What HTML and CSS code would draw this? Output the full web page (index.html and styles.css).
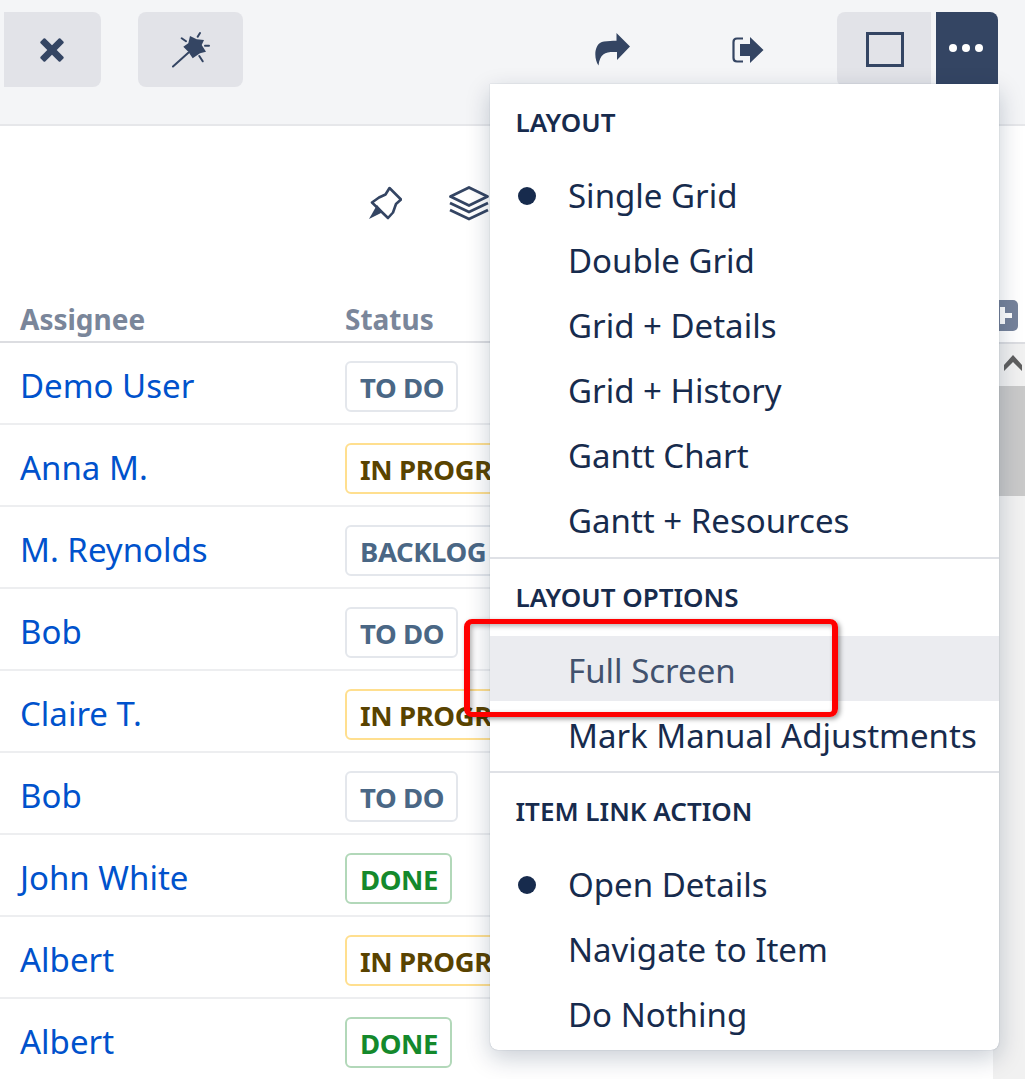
FILE: index.html
```html
<!DOCTYPE html>
<html lang="en">
<head>
<meta charset="utf-8">
<title>Structure</title>
<link rel="stylesheet" href="styles.css">
</head>
<body>
<div class="page">
  <header class="toolbar">
    <button class="tb-btn btn-close">
      <svg width="24" height="24" viewBox="0 0 24 24"><path fill="#344563" d="M5.200 0.600 12 7.300 18.800 0.600 Q19.600 -0.100 20.400 0.600 L23.400 3.600 Q24.100 4.400 23.400 5.200 L16.700 12 23.400 18.800 Q24.100 19.600 23.400 20.400 L20.400 23.400 Q19.600 24.100 18.800 23.400 L12 16.700 5.200 23.400 Q4.400 24.100 3.600 23.400 L0.600 20.400 Q-0.100 19.600 0.600 18.800 L7.300 12 0.600 5.200 Q-0.100 4.400 0.600 3.600 L3.600 0.600 Q4.400 -0.100 5.200 0.600Z"/></svg>
    </button>
    <button class="tb-btn btn-wand">
      <svg width="38" height="38" viewBox="0 0 38 38"><path stroke="#344563" stroke-width="2" stroke-linecap="round" fill="none" d="M1 35.500 16.300 21.700M28 2 25.700 5.700M9.700 7.300 14 10.300M33 14.700H37M27.300 25 30.700 30.300"/><path fill="#344563" d="M18 5 24.700 8.300 32 9 29.700 14 34 20.700 28 22.300 20.700 27.300 16.300 20.700 11.300 15.700 16.300 12.300Z"/></svg>
    </button>
    <span class="tb-spacer"></span>
    <span class="tb-icon icon-share">
      <svg width="36" height="33" viewBox="0 0 36 33"><path fill="#344563" d="M22.500 0 36 13.500 23 27V19C12 18.500 6 20 4.500 32.500 0 27-1 10 10 8.500 14 7.800 18 7.700 22.500 7.700Z"/></svg>
    </span>
    <span class="tb-icon icon-exit">
      <svg width="32" height="26" viewBox="0 0 32 26"><path fill="none" stroke="#344563" stroke-width="2.200" d="M11 1.500H5Q1.500 1.500 1.500 5V21Q1.500 24.500 5 24.500H11"/><path fill="#344563" d="M18 0 31.500 13 18 26V19H8V7H18Z"/></svg>
    </span>
    <button class="tb-btn btn-square"><span class="square-glyph"></span></button>
    <button class="tb-btn btn-more"><span class="dot"></span><span class="dot"></span><span class="dot"></span></button>
  </header>

  <div class="content">
    <main class="grid-area">
      <div class="view-icons">
        <svg width="34" height="34" viewBox="0 0 34 34"><path fill="none" stroke="#344563" stroke-width="2.600" stroke-linejoin="round" d="M21.500 2 33 13.500 28 18 25 26.500 20 32 4 16.500 11 11.500 17.500 8.500Z"/><path fill="#344563" d="M1 33 9 19 15 26Z"/></svg>
        <svg width="40" height="35" viewBox="0 0 40 35"><path fill="none" stroke="#344563" stroke-width="2.800" stroke-linejoin="round" d="M20 1.500 38.500 10.500 20 19.500 1.500 10.500Z"/><path fill="none" stroke="#344563" stroke-width="2.800" d="M1 17 20 26 39 17M1 24 20 33 39 24"/></svg>
      </div>
      <div class="row head">
        <div class="col-a">Assignee</div>
        <div class="col-s">Status</div>
      </div>
      <div class="row"><a class="col-a name">Demo User</a><div class="col-s"><span class="lozenge todo">TO DO</span></div></div>
      <div class="row"><a class="col-a name">Anna M.</a><div class="col-s"><span class="lozenge prog">IN PROGRESS</span></div></div>
      <div class="row"><a class="col-a name">M. Reynolds</a><div class="col-s"><span class="lozenge todo">BACKLOG</span></div></div>
      <div class="row"><a class="col-a name">Bob</a><div class="col-s"><span class="lozenge todo">TO DO</span></div></div>
      <div class="row"><a class="col-a name">Claire T.</a><div class="col-s"><span class="lozenge prog">IN PROGRESS</span></div></div>
      <div class="row"><a class="col-a name">Bob</a><div class="col-s"><span class="lozenge todo">TO DO</span></div></div>
      <div class="row"><a class="col-a name">John White</a><div class="col-s"><span class="lozenge done">DONE</span></div></div>
      <div class="row"><a class="col-a name">Albert</a><div class="col-s"><span class="lozenge prog">IN PROGRESS</span></div></div>
      <div class="row"><a class="col-a name">Albert</a><div class="col-s"><span class="lozenge done">DONE</span></div></div>
    </main>
    <aside class="rail">
      <div class="rail-head"><span class="plus"></span></div>
      <div class="scrollbar">
        <div class="sb-arrow"><svg width="18" height="16" viewBox="0 0 18 16"><path fill="#5f5f5f" d="M9 0 18 10V16L9 7 0 16V10Z"/></svg></div>
        <div class="sb-thumb"></div>
      </div>
    </aside>
  </div>
</div>

<nav class="menu">
  <h4 class="menu-title">LAYOUT</h4>
  <div class="menu-item on">Single Grid</div>
  <div class="menu-item">Double Grid</div>
  <div class="menu-item">Grid + Details</div>
  <div class="menu-item">Grid + History</div>
  <div class="menu-item">Gantt Chart</div>
  <div class="menu-item">Gantt + Resources</div>
  <hr class="menu-sep wide">
  <h4 class="menu-title">LAYOUT OPTIONS</h4>
  <div class="menu-item hover">Full Screen</div>
  <div class="menu-item">Mark Manual Adjustments</div>
  <hr class="menu-sep">
  <h4 class="menu-title">ITEM LINK ACTION</h4>
  <div class="menu-item on">Open Details</div>
  <div class="menu-item">Navigate to Item</div>
  <div class="menu-item">Do Nothing</div>
</nav>
<div class="callout"></div>
</body>
</html>
```
FILE: styles.css
```css
* { box-sizing: border-box; }
html, body { margin: 0; height: 1079px; overflow: hidden; background: #fff; }
body { font-family: "Noto Sans", "Open Sans", sans-serif; color: #172b4d; position: relative; }
.page { display: flex; flex-direction: column; height: 1079px; }

.toolbar { height: 126px; flex: none; background: #f4f5f7; border-bottom: 2px solid #e6e7ea; display: flex; align-items: flex-start; padding: 12px 27px 0 4px; }
.tb-btn { border: 0; padding: 0; height: 75px; background: #e2e3e8; border-radius: 8px; display: flex; align-items: center; justify-content: center; gap: 5px; }
.btn-close { width: 97px; border-radius: 0 8px 8px 0; padding-right: 2px; }
.btn-wand { width: 105px; margin-left: 37px; }
.tb-spacer { flex: 1; }
.tb-icon { display: flex; justify-content: center; align-items: center; height: 75px; }
.icon-share { width: 36px; margin-right: 102px; }
.icon-exit { width: 32px; margin-right: 73px; }
.btn-square { width: 94px; border-radius: 8px 0 0 8px; padding-left: 2px; }
.square-glyph { width: 38px; height: 35px; border: 3px solid #344563; }
.btn-more { width: 62px; margin-left: 5px; background: #344563; border-radius: 0 8px 0 0; height: 80px; padding: 0 2px 9px 0; }
.dot { width: 8px; height: 8px; border-radius: 50%; background: #fff; }

.content { flex: 1; display: flex; min-height: 0; }
.grid-area { flex: 1; min-width: 0; overflow: hidden; }
.view-icons { height: 175px; display: flex; gap: 47px; padding: 60px 0 0 368px; align-items: flex-start; }
.row { height: 82px; display: flex; align-items: center; padding-top: 6px; border-bottom: 2px solid #edeef0; white-space: nowrap; }
.row.head { height: 42px; padding-top: 0; align-items: flex-start; border-bottom-color: #dcdde1; font-size: 28px; font-weight: 700; color: #7a869a; line-height: 36px; }
.col-a { width: 345px; flex: none; padding-left: 20px; }
.col-s { flex: 1; min-width: 0; }
.name { color: #0052cc; font-size: 33px; line-height: 44px; }
.lozenge { display: inline-block; height: 51px; line-height: 50px; padding: 0 12px 0 13px; border: 2px solid; border-radius: 6px; font-size: 27.5px; font-weight: 700; letter-spacing: -.4px; }
.todo { color: #4a6785; border-color: #e4e7ec; }
.prog { color: #594300; border-color: #ffdf8f; }
.done { color: #14892c; border-color: #b2d8b9; }

.rail { width: 32px; flex: none; }
.rail-head { height: 216px; position: relative; }
.plus { position: absolute; left: 1px; top: 174px; width: 24px; height: 31px; border-radius: 5px; background: #76839b; }
.plus::before { content: ""; position: absolute; left: 6px; top: 13px; width: 18px; height: 5px; background: #fff; clip-path: inset(0 6px 0 0); }
.plus::after { content: ""; position: absolute; left: 6px; top: 7px; width: 5px; height: 17px; background: #fff; }
.scrollbar { height: 737px; background: #f1f1f1; border-top: 2px solid #dcdde1; }
.sb-arrow { height: 42px; display: flex; padding-top: 11px; padding-left: 11px; }
.sb-thumb { height: 110px; background: #c9c9c9; }

.menu { position: absolute; left: 490px; top: 84px; width: 509px; height: 966px; background: #fff; border-radius: 0 0 8px 8px; box-shadow: 0 8px 24px rgba(9, 30, 66, .22), 0 0 1px rgba(9, 30, 66, .4); }
.menu-title { margin: 0; padding: 0 25.5px 2px; height: 77px; display: flex; align-items: center; font-size: 26px; font-weight: 600; color: #172b4d; }
.menu-item { height: 65px; line-height: 69px; padding-left: 78px; font-size: 33px; position: relative; white-space: nowrap; }
.menu-item.on::before { content: ""; position: absolute; left: 28px; top: 26px; width: 18px; height: 18px; border-radius: 50%; background: #172b4d; }
.menu-item.hover { background: #ebecf0; color: #42526e; }
.menu-sep { margin: 5px 0 0; border: 0; border-top: 2px solid #dfe1e6; }
.menu-sep.wide { margin-top: 6px; }
.callout { position: absolute; left: 464px; top: 619px; width: 374px; height: 98px; border-style: solid; border-color: #f00; border-width: 5px 6px; border-radius: 8px; box-shadow: 2px 2px 5px rgba(0, 0, 0, .4), inset 2px 2px 5px rgba(0, 0, 0, .3); }
```
